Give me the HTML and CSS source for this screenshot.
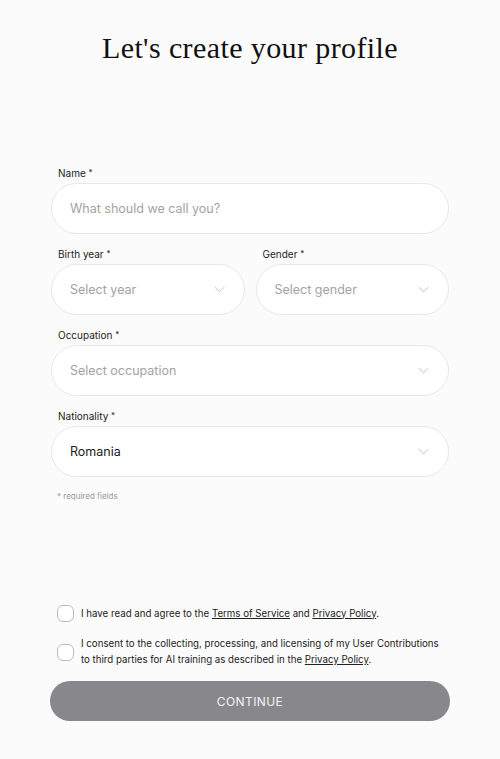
FILE: index.html
```html
<!DOCTYPE html>
<html lang="en">
<head>
<meta charset="utf-8">
<title>Profile</title>
<link rel="stylesheet" href="styles.css">
</head>
<body>
<main class="page">
  <h1 class="title">Let's create your profile</h1>
  <form class="form">
    <div class="field">
      <label class="label">Name <span class="req">*</span></label>
      <div class="control"><span class="placeholder">What should we call you?</span></div>
    </div>
    <div class="row">
      <div class="field">
        <label class="label">Birth year <span class="req">*</span></label>
        <div class="control select"><span class="placeholder">Select year</span>
          <svg class="chev" viewBox="0 0 12 7"><path d="M1 1l5 5 5-5"/></svg></div>
      </div>
      <div class="field">
        <label class="label">Gender <span class="req">*</span></label>
        <div class="control select"><span class="placeholder">Select gender</span>
          <svg class="chev" viewBox="0 0 12 7"><path d="M1 1l5 5 5-5"/></svg></div>
      </div>
    </div>
    <div class="field">
      <label class="label">Occupation <span class="req">*</span></label>
      <div class="control select"><span class="placeholder">Select occupation</span>
        <svg class="chev" viewBox="0 0 12 7"><path d="M1 1l5 5 5-5"/></svg></div>
    </div>
    <div class="field">
      <label class="label">Nationality <span class="req">*</span></label>
      <div class="control select"><span class="value">Romania</span>
        <svg class="chev" viewBox="0 0 12 7"><path d="M1 1l5 5 5-5"/></svg></div>
    </div>
    <p class="note">* required fields</p>
  </form>
  <div class="consents">
    <div class="check">
      <span class="box"></span>
      <p class="check-text">I have read and agree to the <a href="#">Terms of Service</a> and <a href="#">Privacy Policy</a>.</p>
    </div>
    <div class="check">
      <span class="box"></span>
      <p class="check-text">I consent to the collecting, processing, and licensing of my User Contributions to third parties for AI training as described in the <a href="#">Privacy Policy</a>.</p>
    </div>
  </div>
  <button class="btn" type="button">CONTINUE</button>
</main>
</body>
</html>
```

FILE: styles.css
```css
* { box-sizing: border-box; }
html, body { margin: 0; padding: 0; background: #fbfbfb; }
body { font-family: Inter, "Noto Sans", sans-serif; color: #1a1a1a; }
.page { width: 500px; height: 759px; padding: 0 51px 0 51px; display: flex; flex-direction: column; }
.title {
  font-family: "Liberation Serif", serif; font-weight: 400; font-size: 30px;
  text-align: center; margin: 30px 0 0; line-height: 36px; color: #111; letter-spacing: 0.4px;
}
.form { margin-top: 101px; display: flex; flex-direction: column; gap: 14px; }
.row { display: flex; gap: 11px; }
.row .field { flex: 1; }
.field { display: flex; flex-direction: column; }
.label { display: block; height: 12px; font-size: 10px; line-height: 12px; padding-left: 7px; margin-bottom: 4px; color: #222; }
.req { font-size: 8px; line-height: 0; vertical-align: 2px; }
.control {
  height: 51px; flex: none; border: 1px solid #e8e8e8; border-radius: 26px; background: #fff;
  display: flex; align-items: center; padding: 0 18px; font-size: 12.5px;
}
.select { justify-content: space-between; }
.placeholder { color: #a3a3a3; }
.value { color: #1a1a1a; }
.chev { width: 11px; height: 7px; fill: none; stroke: #b4b4b4; stroke-width: 0.9; margin-right: 1px; }
.note { margin: 0 0 0 6px; line-height: 10px; font-size: 8px; color: #9a9a9a; }
.consents { margin-top: 104px; display: flex; flex-direction: column; gap: 14px; padding-left: 6px; }
.check { display: flex; align-items: center; gap: 7px; }
.box { width: 17px; height: 17px; flex: none; border: 1.5px solid #bcbcbc; border-radius: 6px; background: #fff; }
.check-text { margin: 0; max-width: 362px; font-size: 9.7px; line-height: 16px; color: #222; }
.check-text a { color: #222; text-decoration: underline; }
.btn {
  margin: 13px -1px 0; height: 40px; flex: none; border: 0; border-radius: 20px; background: #88888c;
  color: #f2f2f2; font-family: Inter, sans-serif; font-size: 12px; letter-spacing: 0.4px;
}
```
